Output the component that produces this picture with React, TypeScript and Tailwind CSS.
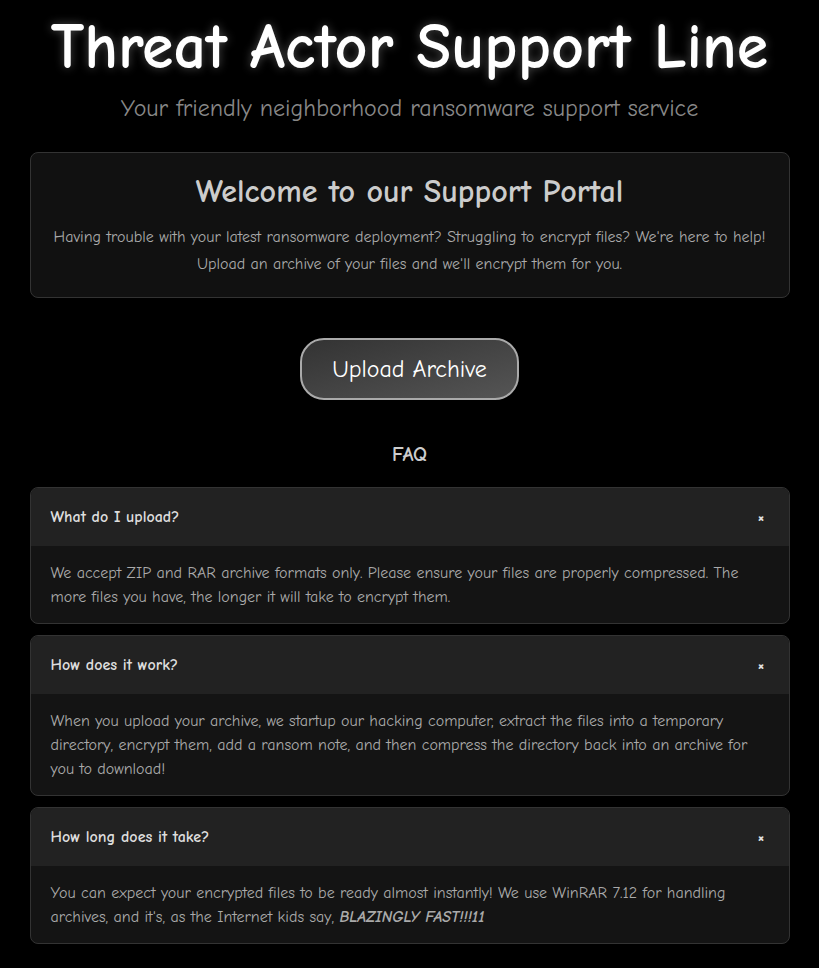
import React, { useState } from 'react';

interface FaqItem {
  q: string;
  a: React.ReactNode;
}

const faqs: FaqItem[] = [
  {
    q: 'What do I upload?',
    a: 'We accept ZIP and RAR archive formats only. Please ensure your files are properly compressed. The more files you have, the longer it will take to encrypt them.',
  },
  {
    q: 'How does it work?',
    a: 'When you upload your archive, we startup our hacking computer, extract the files into a temporary directory, encrypt them, add a ransom note, and then compress the directory back into an archive for you to download!',
  },
  {
    q: 'How long does it take?',
    a: (
      <>
        You can expect your encrypted files to be ready almost instantly! We use WinRAR 7.12 for handling
        archives, and it's, as the Internet kids say, <strong><em>BLAZINGLY FAST!!!11</em></strong>
      </>
    ),
  },
];

const font = { fontFamily: '"Comic Sans MS", "Comic Neue", "DejaVu Sans", sans-serif' };

const App: React.FC = () => {
  const [open, setOpen] = useState<boolean[]>([true, true, true]);

  const toggle = (i: number) => {
    setOpen(prev => prev.map((v, idx) => (idx === i ? !v : v)));
  };

  return (
    <div className="min-h-screen bg-black text-[#ccc]" style={font}>
      <div className="mx-auto max-w-[760px] pt-[9px] pb-6">
        <h1 className="text-center text-[64px] font-bold leading-[76px] text-white [text-shadow:0_0_10px_rgba(255,255,255,0.3)]">
          Threat Actor Support Line
        </h1>
        <p className="mt-[7px] text-center text-[24px] leading-[32px] text-[#888]">
          Your friendly neighborhood ransomware support service
        </p>

        <div className="mt-[28px] rounded-lg border border-[#333] bg-[#111] px-5 pt-[19px] pb-[19px] text-center">
          <h2 className="text-[32px] font-bold leading-[40px] text-[#ccc]">Welcome to our Support Portal</h2>
          <p className="mt-[12px] text-[16px] leading-[27px] text-[#aaa]">
            Having trouble with your latest ransomware deployment? Struggling to encrypt files? We're here to help!
            Upload an archive of your files and we'll encrypt them for you.
          </p>
        </div>

        <div className="mt-[40px] flex justify-center">
          <button className="h-[62px] w-[219px] rounded-[24px] border-2 border-[#aaa] bg-gradient-to-br from-[#333] to-[#555] text-[24px] text-white">
            Upload Archive
          </button>
        </div>

        <h3 className="mt-[41px] text-center text-[20px] font-bold leading-[28px] text-[#ccc]">FAQ</h3>

        <div className="mt-[18px] flex flex-col gap-[11px]">
          {faqs.map((f, i) => (
            <div key={i} className="overflow-hidden rounded-lg border border-[#333] bg-[#141414]">
              <button
                onClick={() => toggle(i)}
                className="flex h-[58px] w-full items-center justify-between bg-[#222] px-5 text-left text-[16px] font-bold text-[#ddd]"
              >
                <span>{f.q}</span>
                <span className="pr-[4px] text-[18px] text-[#ddd]">{open[i] ? '×' : '+'}</span>
              </button>
              {open[i] && (
                <div className="px-5 pt-[15px] pb-[14px] text-[16px] leading-[24px] text-[#aaa]">{f.a}</div>
              )}
            </div>
          ))}
        </div>
      </div>
    </div>
  );
};

export default App;
